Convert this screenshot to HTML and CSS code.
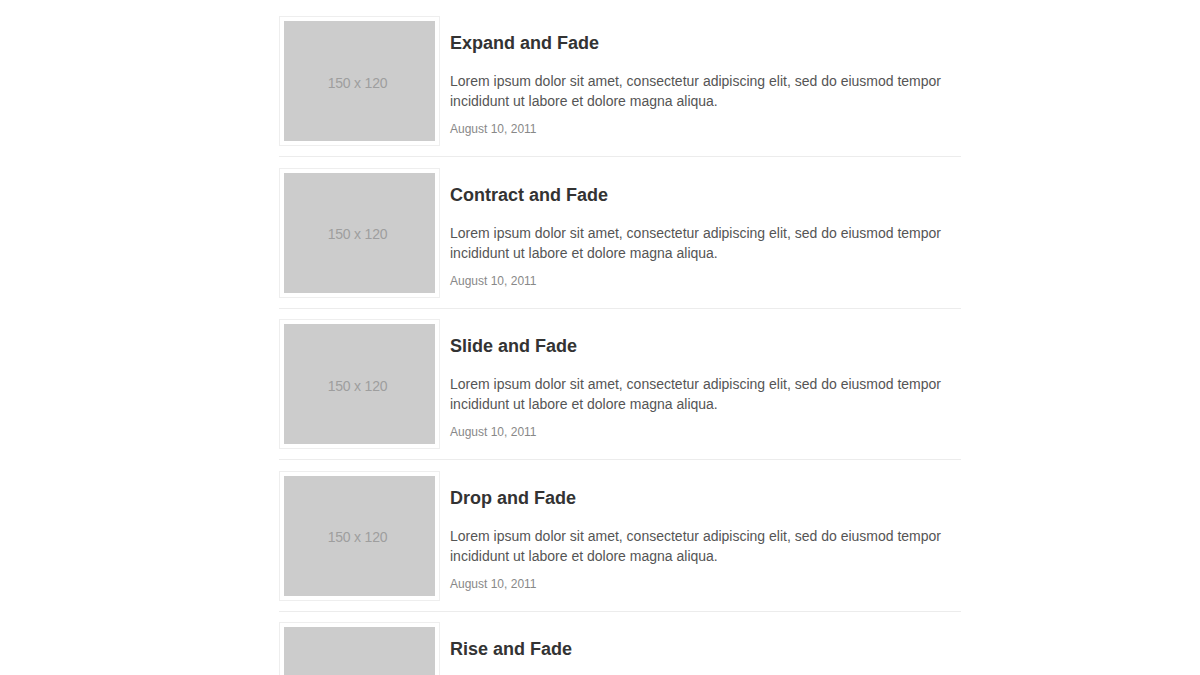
FILE: index.html
```
<!DOCTYPE html>
<html>
<head>
	<title>Effects</title>
	<meta charset="utf-8"/>
	<link rel="stylesheet" href="styles.css">
</head>
<body>
	<ul class="list">
		<li class="item">
			<div class="thumb"><div class="ph">150 x 120</div></div>
			<div class="info">
				<h3 class="item-title">Expand and Fade</h3>
				<p class="item-text">Lorem ipsum dolor sit amet, consectetur adipiscing elit, sed do eiusmod tempor incididunt ut labore et dolore magna aliqua.</p>
				<span class="item-date">August 10, 2011</span>
			</div>
		</li>
		<li class="item">
			<div class="thumb"><div class="ph">150 x 120</div></div>
			<div class="info">
				<h3 class="item-title">Contract and Fade</h3>
				<p class="item-text">Lorem ipsum dolor sit amet, consectetur adipiscing elit, sed do eiusmod tempor incididunt ut labore et dolore magna aliqua.</p>
				<span class="item-date">August 10, 2011</span>
			</div>
		</li>
		<li class="item">
			<div class="thumb"><div class="ph">150 x 120</div></div>
			<div class="info">
				<h3 class="item-title">Slide and Fade</h3>
				<p class="item-text">Lorem ipsum dolor sit amet, consectetur adipiscing elit, sed do eiusmod tempor incididunt ut labore et dolore magna aliqua.</p>
				<span class="item-date">August 10, 2011</span>
			</div>
		</li>
		<li class="item">
			<div class="thumb"><div class="ph">150 x 120</div></div>
			<div class="info">
				<h3 class="item-title">Drop and Fade</h3>
				<p class="item-text">Lorem ipsum dolor sit amet, consectetur adipiscing elit, sed do eiusmod tempor incididunt ut labore et dolore magna aliqua.</p>
				<span class="item-date">August 10, 2011</span>
			</div>
		</li>
		<li class="item">
			<div class="thumb"><div class="ph">150 x 120</div></div>
			<div class="info">
				<h3 class="item-title">Rise and Fade</h3>
				<p class="item-text">Lorem ipsum dolor sit amet, consectetur adipiscing elit, sed do eiusmod tempor incididunt ut labore et dolore magna aliqua.</p>
				<span class="item-date">August 10, 2011</span>
			</div>
		</li>
	</ul>
</body>
</html>
```
FILE: styles.css
```
html, body{
	margin: 0;
	padding: 0;
	background: #fff;
	overflow: hidden;
}

*{
	font-family: "Liberation Sans", Arial, sans-serif;
}

.list{
	list-style: none;
	width: 682px;
	margin: 5.75px 0 0 279px;
	padding: 0;
}

.item{
	display: flex;
	padding: 10.25px 0;
	border-bottom: 1px solid #ececec;
}

.thumb{
	padding: 4px;
	border: 1px solid #eee;
	flex: none;
}

.ph{
	width: 151px;
	height: 120px;
	box-sizing: border-box;
	padding: 3px 4px 0 0;
	background: #ccc;
	color: #9e9e9e;
	font-size: 14px;
	letter-spacing: -0.2px;
	display: flex;
	align-items: center;
	justify-content: center;
}

.info{
	margin-left: 10px;
	padding-top: 16px;
}

.item-title{
	margin: 0;
	font-size: 18px;
	line-height: 22px;
	color: #333;
}

.item-text{
	margin: 17px 0 10px;
	font-size: 14px;
	line-height: 20px;
	color: #555;
}

.item-date{
	display: block;
	font-size: 12px;
	line-height: 16px;
	color: #888;
}
```
